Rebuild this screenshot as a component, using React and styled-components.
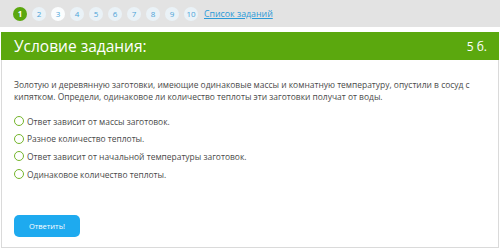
import styled, { createGlobalStyle } from 'styled-components';

const GlobalStyle = createGlobalStyle`
  html, body {
    margin: 0;
    padding: 0;
    background: #ffffff;
    font-family: "Open Sans", "Liberation Sans", sans-serif;
  }
`;

const Page = styled.div`
  width: 500px;
  height: 251px;
  overflow: hidden;
  background: #ffffff;
`;

const TopBar = styled.div`
  height: 27px;
  background: #e3e3e3;
  display: flex;
  align-items: center;
  padding-left: 13px;
  gap: 5px;
`;

const PageDot = styled.span`
  width: 14px;
  height: 14px;
  border-radius: 50%;
  display: flex;
  align-items: center;
  justify-content: center;
  font-size: 8px;
  background: ${(p) => (p.$active ? '#5ba70f' : p.$seen ? '#fbfdfe' : '#eaf2f7')};
  color: ${(p) => (p.$active ? '#ffffff' : '#4aa3d8')};
  font-weight: ${(p) => (p.$active ? 700 : 400)};
`;

const TaskLink = styled.a`
  margin-left: 1px;
  font-size: 8.8px;
  color: #2b9ad8;
  text-decoration: underline;
`;

const Card = styled.div`
  margin: 5px 1px 0 1px;
  height: 216px;
  border: 1px solid #dadada;
  border-top: none;
  box-sizing: border-box;
  display: flex;
  flex-direction: column;
`;

const Header = styled.div`
  height: 28px;
  margin: 0 -1px;
  background: #5ba80e;
  color: #ffffff;
  display: flex;
  align-items: center;
  justify-content: space-between;
  padding: 0 12px 0 13px;
`;

const Title = styled.span`
  font-size: 15.5px;
`;

const Points = styled.span`
  font-size: 12px;
`;

const Body = styled.div`
  padding: 19px 12px 0 12px;
  display: flex;
  flex-direction: column;
  flex: 1;
`;

const Question = styled.p`
  margin: 0;
  font-size: 8.45px;
  line-height: 12px;
  color: #4a4a4a;
`;

const Options = styled.div`
  margin-top: 12px;
  display: flex;
  flex-direction: column;
  gap: 5.7px;
`;

const Option = styled.label`
  display: flex;
  align-items: center;
  gap: 3px;
  height: 12px;
  font-size: 8.45px;
  color: #4a4a4a;
`;

const Radio = styled.span`
  width: 10px;
  height: 10px;
  border-radius: 50%;
  border: 1.5px solid #74b52b;
  box-sizing: border-box;
  background: #ffffff;
`;

const Submit = styled.button`
  margin-top: auto;
  margin-bottom: 10px;
  align-self: flex-start;
  width: 66px;
  height: 22px;
  border: none;
  border-radius: 5px;
  background: #1eaaef;
  color: #ffffff;
  font-family: inherit;
  font-size: 7.5px;
  padding: 0;
`;

const options = [
  'Ответ зависит от массы заготовок.',
  'Разное количество теплоты.',
  'Ответ зависит от начальной температуры заготовок.',
  'Одинаковое количество теплоты.',
];

export default function App() {
  return (
    <Page>
      <GlobalStyle />
      <TopBar>
        {[1, 2, 3, 4, 5, 6, 7, 8, 9, 10].map((n) => (
          <PageDot key={n} $active={n === 1} $seen={n === 3}>
            {n}
          </PageDot>
        ))}
        <TaskLink href="#">Список заданий</TaskLink>
      </TopBar>
      <Card>
        <Header>
          <Title>Условие задания:</Title>
          <Points>5 б.</Points>
        </Header>
        <Body>
          <Question>
            Золотую и деревянную заготовки, имеющие одинаковые массы и комнатную температуру, опустили в сосуд с
            кипятком. Определи, одинаковое ли количество теплоты эти заготовки получат от воды.
          </Question>
          <Options>
            {options.map((o) => (
              <Option key={o}>
                <Radio />
                {o}
              </Option>
            ))}
          </Options>
          <Submit>Ответить!</Submit>
        </Body>
      </Card>
    </Page>
  );
}
